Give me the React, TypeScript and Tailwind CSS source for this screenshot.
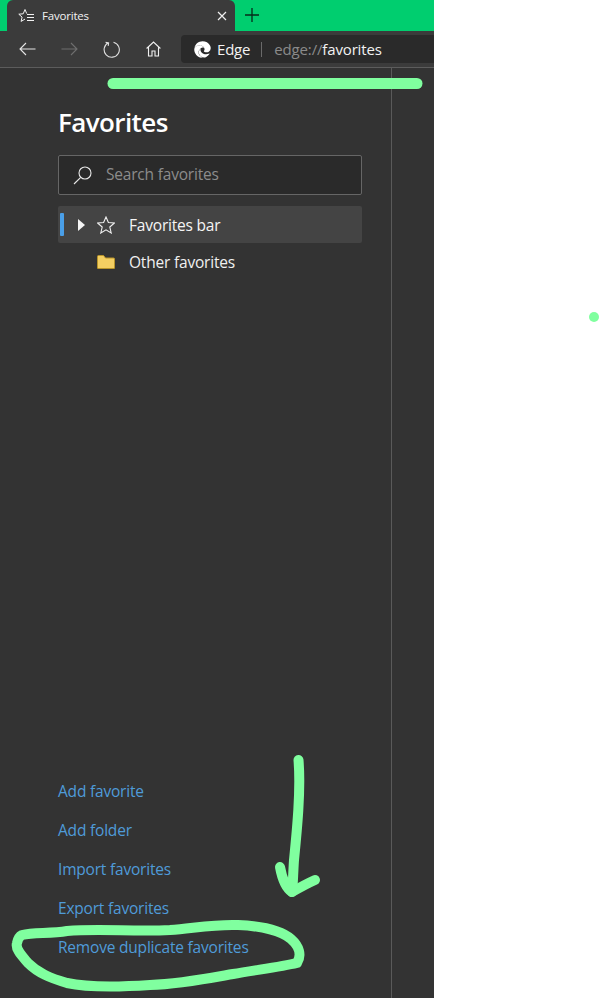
import React from "react";
import { FaEdge } from "react-icons/fa";

const font = { fontFamily: '"Open Sans", "Noto Sans", sans-serif' };

function TabStar() {
  return (
    <svg width="17" height="16" viewBox="0 0 17 16" fill="none" stroke="#f2f2f2" strokeWidth="1">
      <path d="M7 1.500l1.700 4h-.1M7 1.500L5.200 5.800.8 6.200l3.300 2.900-1 4.300L7 11.100" />
      <path d="M9 6.500h7M9 9.500h7M9 12.500h7" />
    </svg>
  );
}

function Annotations() {
  return (
    <svg className="absolute left-0 top-0 pointer-events-none" width="600" height="998" viewBox="0 0 600 998" fill="none" stroke="#80ff9f" strokeLinecap="round" strokeLinejoin="round">
      <path d="M113 83.500H417" strokeWidth="11" />
      <circle cx="594" cy="317" r="5" fill="#80ff9f" stroke="none" />
      <path d="M298.500 760C301 790 297 830 294 860C293 875 293 885 292 892" strokeWidth="10" />
      <path d="M280 867C282 878 286 888 292 892C299 888 306 884 315 880" strokeWidth="10" />
      <path d="M22 935C34 932 50 934 67 931C100 928 133 932 170 930C195 928 215 924 238 925C262 926 282 931 291 939C299 946 302 955 297 963C280 967 255 970 233 974C205 979 180 984 150 985C120 987 90 988 67 983C50 978 38 973 28 963C22 956 15 949 17 943C18 938 20 936 22 935Z" strokeWidth="10" />
    </svg>
  );
}

export default function App() {
  return (
    <div className="relative flex w-[600px] h-[998px] bg-white overflow-hidden" style={font}>
      <div className="flex flex-col w-[434px] h-full bg-[#333333]">
        <div className="flex h-[31px] bg-[#00ce6f] pl-[7px]">
          <div className="flex items-center w-[228px] h-full bg-[#3b3b3b] rounded-t-[6px] pl-[11px] pr-[8px]">
            <TabStar />
            <span className="ml-[7px] text-[11.5px] text-[#f2f2f2] tracking-[-0.2px]">Favorites</span>
            <svg className="ml-auto" width="10" height="10" viewBox="0 0 10 10" stroke="#f0f0f0" strokeWidth="1.2">
              <path d="M1 1l8 8M9 1l-8 8" />
            </svg>
          </div>
          <svg className="ml-[10px] mt-[8px]" width="14" height="14" viewBox="0 0 14 14" stroke="#062b1a" strokeWidth="1.3">
            <path d="M7 0v14M0 7h14" />
          </svg>
        </div>
        <div className="flex items-center h-[37px] bg-[#3b3b3b] border-b border-[#5c5c5c]">
          <svg className="ml-[19px]" width="17" height="14" viewBox="0 0 17 14" fill="none" stroke="#e6e6e6" strokeWidth="1.1">
            <path d="M16.500 7H1M7 1L1 7l6 6" />
          </svg>
          <svg className="ml-[25px]" width="17" height="14" viewBox="0 0 17 14" fill="none" stroke="#6f6f6f" strokeWidth="1.1">
            <path d="M.5 7H16M10 1l6 6-6 6" />
          </svg>
          <svg className="ml-[25px]" width="17" height="17" viewBox="0 0 17 17" fill="none" stroke="#e0e0e0" strokeWidth="1.1">
            <path d="M5.300 1.800A7.600 7.600 0 1 0 10.500 1.200" />
            <path d="M2.600 1.400l3 .5-.4 3" />
          </svg>
          <svg className="ml-[26px]" width="15" height="16" viewBox="0 0 15 16" fill="none" stroke="#f0f0f0" strokeWidth="1.1">
            <path d="M.6 7.500L7.500 1l6.900 6.500M2.500 6v9h3.500v-5h3v5h3.500V6" />
          </svg>
          <div className="flex items-center ml-[20px] flex-1 h-[28px] bg-[#2a2a2a] rounded-l-[4px] pl-[13px]">
            <FaEdge size={17} color="#ffffff" />
            <span className="ml-[6px] text-[15px] text-[#f2f2f2] tracking-[-0.2px]">Edge</span>
            <span className="ml-[11px] w-px h-[15px] bg-[#6a6a6a]" />
            <span className="ml-[12px] text-[15px] text-[#8a8a8a] tracking-[-0.15px]">
              edge://<span className="text-[#f2f2f2]">favorites</span>
            </span>
          </div>
        </div>
        <div className="flex flex-1">
          <div className="flex flex-col w-[392px] border-r border-[#5a5a5a] pl-[58px] pr-[29px] pb-[40px]">
            <h1 className="mt-[36px] text-[26px] leading-[36px] font-semibold text-white tracking-[-0.6px]">Favorites</h1>
            <div className="flex items-center mt-[15px] h-[40px] bg-[#2a2a2a] border border-[#666666] rounded-[2px] pl-[14px]">
              <svg width="20" height="20" viewBox="0 0 20 20" fill="none" stroke="#e8e8e8" strokeWidth="1.1">
                <circle cx="12" cy="8" r="6" />
                <path d="M7.700 12.300L1 19" />
              </svg>
              <span className="ml-[13px] text-[15.5px] text-[#8c8c8c] tracking-[-0.2px]">Search favorites</span>
            </div>
            <div className="flex items-center mt-[11px] h-[37px] bg-[#444444] rounded-[2px]">
              <span className="ml-[2px] w-[4px] h-[23px] bg-[#4a9fe8] rounded-[1px]" />
              <svg className="ml-[14px]" width="7" height="12" viewBox="0 0 7 12" fill="#f5f5f5">
                <path d="M0 0l7 6-7 6z" />
              </svg>
              <svg className="ml-[12px]" width="18" height="18" viewBox="0 0 18 18" fill="none" stroke="#f0f0f0" strokeWidth="1.1">
                <path d="M9 1l2.400 5.500 6 .5-4.600 4 1.400 6L9 13.800 3.800 17l1.400-6L.6 7l6-.5z" />
              </svg>
              <span className="ml-[14px] pt-[2px] text-[15.5px] text-[#f5f5f5] tracking-[-0.2px]">Favorites bar</span>
            </div>
            <div className="flex items-center h-[37px] pl-[39px]">
              <svg width="18" height="14" viewBox="0 0 18 14">
                <path d="M0.500 13V1.500A1 1 0 0 1 1.500.5h5L8.500 3h8A1 1 0 0 1 17.500 4v9a.5.5 0 0 1-.5.5H1a.5.5 0 0 1-.5-.5z" fill="#f4cf62" stroke="#b8942a" />
              </svg>
              <span className="ml-[14px] pt-[2px] text-[15.5px] text-[#f0f0f0] tracking-[-0.2px]">Other favorites</span>
            </div>
            <div className="mt-auto flex flex-col gap-[17px] text-[15.5px] leading-[22px] text-[#4f9bd9] tracking-[-0.2px]">
              <span>Add favorite</span>
              <span>Add folder</span>
              <span>Import favorites</span>
              <span>Export favorites</span>
              <span>Remove duplicate favorites</span>
            </div>
          </div>
        </div>
      </div>
      <Annotations />
    </div>
  );
}
